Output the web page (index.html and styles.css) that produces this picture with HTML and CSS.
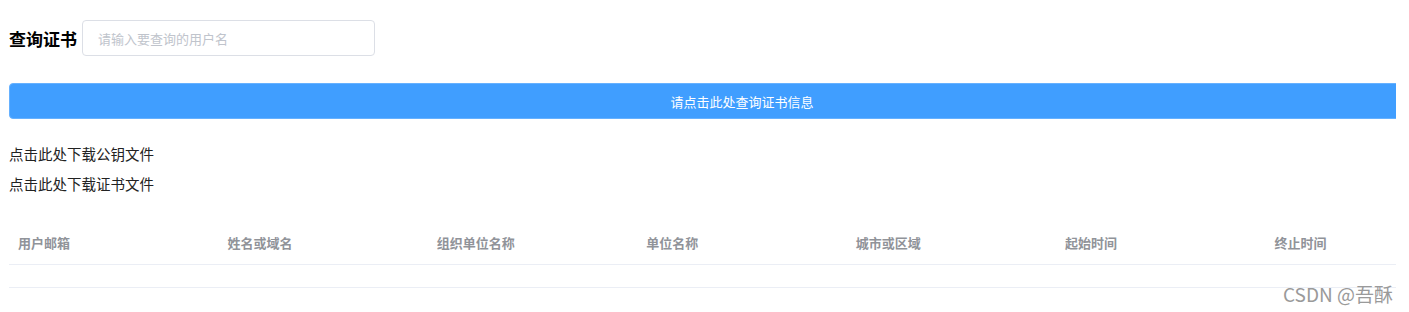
FILE: index.html
```html
<!DOCTYPE html>
<html lang="zh-CN">
<head>
    <meta charset="UTF-8">
    <title>查询证书</title>
    <link rel="stylesheet" href="styles.css">
</head>
<body>
    <div class="page">
        <div class="inner">
            <div class="search-row">
                <h3 class="title">查询证书</h3>
                <input type="text" class="search-input" placeholder="请输入要查询的用户名">
            </div>

            <button class="query-btn">请点击此处查询证书信息</button>

            <div class="links">
                <p class="link">点击此处下载公钥文件</p>
                <p class="link">点击此处下载证书文件</p>
            </div>

            <table class="cert-table">
                <thead>
                    <tr>
                        <th>用户邮箱</th>
                        <th>姓名或域名</th>
                        <th>组织单位名称</th>
                        <th>单位名称</th>
                        <th>城市或区域</th>
                        <th>起始时间</th>
                        <th>终止时间</th>
                    </tr>
                </thead>
                <tbody>
                    <tr class="empty-row">
                        <td colspan="7"></td>
                    </tr>
                </tbody>
            </table>
        </div>
    </div>
    <div class="watermark">CSDN @吾酥</div>
</body>
</html>
```

FILE: styles.css
```css
body {
    margin: 0;
    font-family: "Noto Sans CJK SC", "Noto Sans", sans-serif;
    background-color: #ffffff;
    color: #303133;
}
.page {
    width: 1387px;
    margin-left: 9px;
    overflow: hidden;
}
.inner {
    width: 1466px;
    padding-top: 20px;
}
.search-row {
    display: flex;
    align-items: center;
    gap: 5px;
}
.title {
    margin: 0;
    font-size: 17px;
    font-weight: bold;
    color: #000;
}
.search-input {
    box-sizing: border-box;
    width: 293px;
    height: 36px;
    padding: 0 15px;
    border: 1px solid #dcdfe6;
    border-radius: 4px;
    font-family: inherit;
    font-size: 13px;
    outline: none;
}
.search-input::placeholder {
    color: #c0c4cc;
}
.query-btn {
    display: block;
    width: 100%;
    height: 36px;
    margin-top: 27px;
    border: 1px solid #66b1ff;
    border-radius: 4px;
    background-color: #409eff;
    color: #ffffff;
    font-family: inherit;
    font-size: 13px;
    cursor: pointer;
}
.links {
    padding-top: 25px;
}
.link {
    margin: 0 0 10px;
    font-size: 14.5px;
    line-height: 20px;
    color: #222;
    cursor: pointer;
}
.cert-table {
    width: 100%;
    margin-top: 26px;
    border-collapse: collapse;
    table-layout: fixed;
}
.cert-table th {
    height: 44px;
    padding: 0 9px;
    text-align: left;
    font-size: 13px;
    font-weight: bold;
    color: #909399;
    border-bottom: 1px solid #ebeef5;
}
.empty-row td {
    height: 22px;
    padding: 0;
    border-bottom: 1px solid #ebeef5;
}
.watermark {
    position: absolute;
    right: 16px;
    top: 280px;
    font-family: "Liberation Sans Narrow", "Noto Sans CJK SC", sans-serif;
    font-size: 19px;
    color: #9a9a9a;
}
```
